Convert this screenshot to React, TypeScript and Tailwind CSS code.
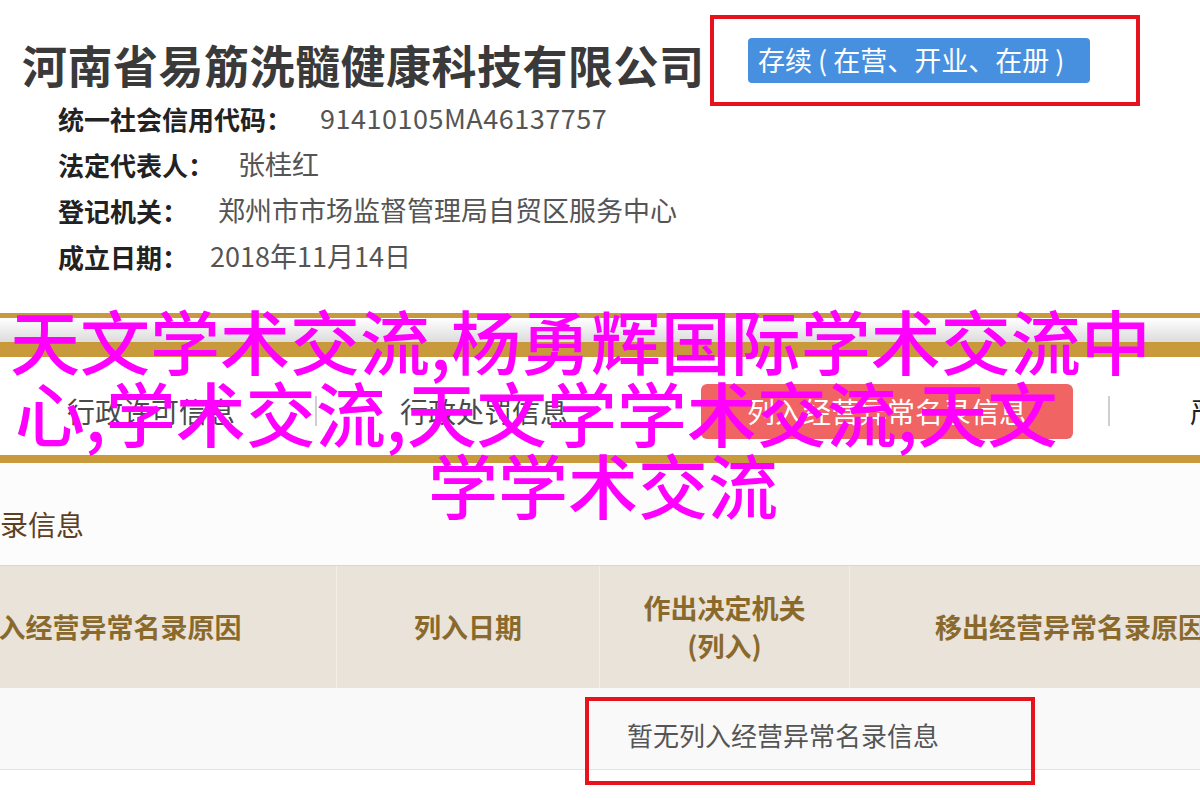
import React from "react";

const CJK = { fontFamily: '"Noto Sans CJK SC", "Noto Sans", sans-serif' };

function InfoRow({ label, value, gap }: { label: string; value: string; gap: string }) {
  return (
    <div className="flex items-center h-[46px] pl-[58px] whitespace-nowrap">
      <span className="text-[26px] font-bold text-[#222]">{label}</span>
      <span className={`text-[27px] text-[#555] ${gap}`}>{value}</span>
    </div>
  );
}

export default function App() {
  return (
    <div className="relative w-[1200px] h-[800px] overflow-hidden bg-white" style={CJK}>
      {/* Top company block */}
      <div className="flex items-start pt-[15px]">
        <div className="shrink-0 w-[710px] pl-[22px] pt-[22px] text-[45px] tracking-[0.5px] leading-[56px] font-bold text-[#3a3a3a] whitespace-nowrap">
          河南省易筋洗髓健康科技有限公司
        </div>
        <div className="shrink-0 w-[430px] h-[91px] border-[4px] border-[#e8121c] flex items-center pl-[34px]">
          <div className="h-[45px] w-[342px] rounded-[4px] bg-[#4790e0] flex items-center pl-[10px] text-[27px] text-white whitespace-nowrap">
            存续 ( 在营、开业、在册 )
          </div>
        </div>
      </div>

      {/* Info rows */}
      <div className="-mt-[11px]">
        <InfoRow label="统一社会信用代码：" value="91410105MA46137757" gap="ml-[28px] tracking-[0.5px]" />
        <InfoRow label="法定代表人：" value="张桂红" gap="ml-[24px]" />
        <InfoRow label="登记机关：" value="郑州市市场监督管理局自贸区服务中心" gap="ml-[30px]" />
        <InfoRow label="成立日期：" value="2018年11月14日" gap="ml-[22px]" />
      </div>

      {/* Tab band */}
      <div className="mt-[34px]">
        <div className="h-[5px] bg-[#c99a3c]" />
        <div className="h-[24px] bg-gradient-to-b from-white to-[#dcdcdc]" />
        <div className="h-[15px] bg-[#c99a3c]" />
        <div className="h-[98px] pt-[10px] bg-white flex items-center whitespace-nowrap overflow-hidden text-[28px] text-[#4a4a4a]">
          <span className="shrink-0 ml-[67px]">行政许可信息</span>
          <span className="shrink-0 ml-[80px] w-[2px] h-[30px] bg-[#cfcfcf]" />
          <span className="shrink-0 ml-[83px]">行政处罚信息</span>
          <span className="shrink-0 ml-[133px] w-[372px] h-[55px] rounded-[6px] bg-[#f06464] text-white flex items-center justify-center">
            列入经营异常名录信息
          </span>
          <span className="shrink-0 ml-[35px] w-[2px] h-[30px] bg-[#cfcfcf]" />
          <span className="shrink-0 ml-[80px] text-[#222]">严重违法失信信息</span>
        </div>
        <div className="h-[8px] bg-[#c99a3c]" />
      </div>

      {/* Section heading */}
      <div className="h-[102px] pt-[20px] bg-[#fcfcfc] flex items-center whitespace-nowrap">
        <span className="shrink-0 -ml-[140px] text-[28px] text-[#5c4024]">经营异常名录信息</span>
      </div>

      {/* Table */}
      <div className="-ml-[123px] w-[1413px]">
        <div className="flex h-[123px] bg-[#e9e3d9] border-t border-[#ddd6ca] text-[27px] font-bold text-[#8a6a2c] whitespace-nowrap">
          <div className="shrink-0 w-[460px] flex items-center justify-center border-r border-[#f3efe8]">列入经营异常名录原因</div>
          <div className="shrink-0 w-[263px] flex items-center justify-center border-r border-[#f3efe8]">列入日期</div>
          <div className="shrink-0 w-[250px] flex flex-col items-center justify-center leading-[38px] border-r border-[#f3efe8]">
            <span>作出决定机关</span>
            <span>(列入)</span>
          </div>
          <div className="shrink-0 w-[440px] flex items-center justify-center">移出经营异常名录原因</div>
        </div>
        <div className="h-[82px] bg-[#f9f9f9] border-b border-[#e4e4e4] pt-[9px] pl-[708px]">
          <div className="w-[450px] h-[88px] border-[4px] border-[#e8121c] flex items-start pt-[14px] pl-[38px] text-[26px] text-[#555] whitespace-nowrap">
            暂无列入经营异常名录信息
          </div>
        </div>
      </div>

      {/* Magenta overlay caption */}
      <div className="absolute left-0 top-[304px] w-[1200px] text-[70px] leading-[72px] font-medium text-[#ff00ff] whitespace-nowrap pointer-events-none">
        <div className="pl-[10px]">天文学术交流,杨勇辉国际学术交流中</div>
        <div className="pl-[15px]">心,学术交流,天文学学术交流,天文</div>
        <div className="pl-[428px]">学学术交流</div>
      </div>
    </div>
  );
}
